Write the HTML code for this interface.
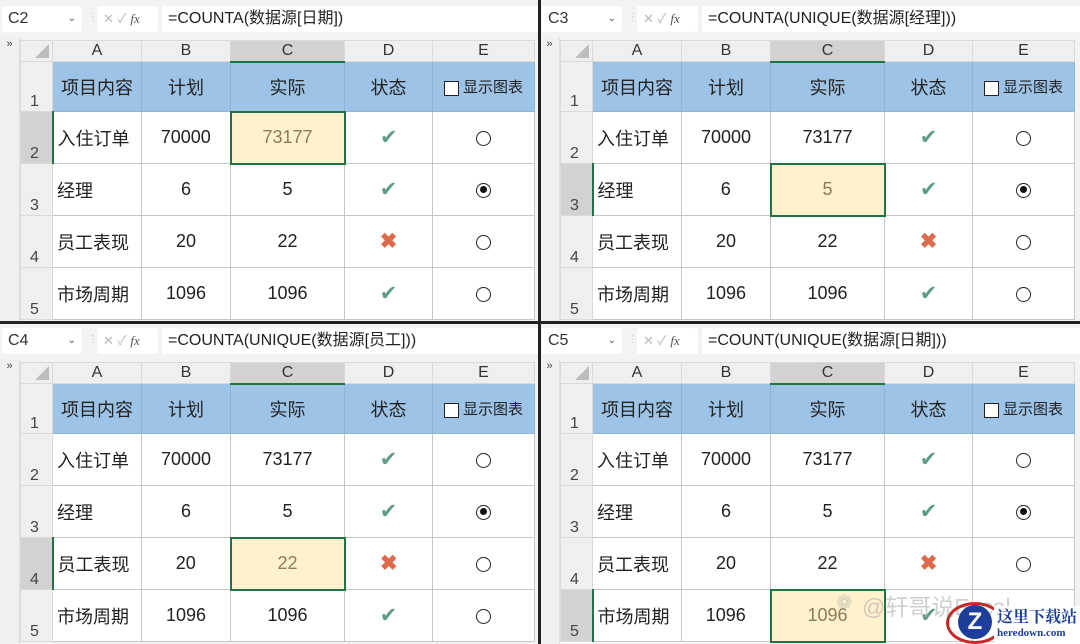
<!DOCTYPE html>
<html><head><meta charset="utf-8"><style>
*{margin:0;padding:0;box-sizing:border-box}
body{width:1080px;height:644px;background:#fff;position:relative;overflow:hidden;font-family:"Liberation Sans","Noto Sans CJK SC",sans-serif;color:#222}
.q{position:absolute;width:540px;height:322px;overflow:hidden;background:#f3f3f3}
.bar{position:absolute;left:0;top:0;width:540px;height:38px;background:#f3f3f3}
.nb{position:absolute;left:2px;top:6px;width:80px;height:26px;background:#fff;border-radius:3px;font-size:16px;line-height:26px;padding-left:6px;color:#333}
.nb i{position:absolute;right:6px;top:0;font-style:normal;font-size:10px;color:#555}
.dots{position:absolute;left:88px;top:12px;font-size:10px;color:#bbb}
.fxb{position:absolute;left:97px;top:6px;width:61px;height:26px;background:#fff;border-radius:3px;font-size:13px;line-height:26px;color:#bbb;padding-left:6px}
.fxb b{color:#555;font-style:italic;font-family:"Liberation Serif",serif;font-weight:normal;margin-left:4px}
.fi{position:absolute;left:162px;top:6px;width:380px;height:26px;background:#fff;font-size:16px;line-height:26px;padding-left:6px;color:#222}
.strip{position:absolute;left:0;top:38px;width:20px;height:290px;background:#f0f0f0;font-size:11px;color:#444;text-align:center;border-right:1px solid #ddd}
table{position:absolute;left:20px;top:40px;border-collapse:collapse;table-layout:fixed;background:#fff}
td{border:1px solid #c6c6c6;text-align:center;font-size:18px;padding:0;overflow:hidden;white-space:nowrap}
tr.ch td{height:21px;background:#efefef;font-size:16px;color:#333;border-color:#dadada}
tr.ch td.s{background:#d2d2d2;border-bottom:2px solid #217346}
td.rh{background:#efefef;color:#444;font-size:16px;text-align:left;vertical-align:bottom;padding-left:9px;border-color:#dadada}
td.rh.s{background:#d2d2d2;border-right:2px solid #217346}
td.corner{background:#efefef;position:relative}
td.corner:after{content:"";position:absolute;right:3px;bottom:3px;border-left:14px solid transparent;border-bottom:14px solid #bdbdbd}
tr.h td{background:#9dc3e6;height:50px;border-color:#8fb4d6}
tr.h td.rh{background:#efefef;border-color:#dadada}
tr.r td{height:52px}
td.l{text-align:left;padding-left:4px}
td.sel{background:#fff2cc;color:#8b7b5b;border:2px solid #217346}
.ck{color:#5e9c84;font-size:21px}
.x{color:#de6a4c;font-size:21px;font-weight:bold}
.rd{display:inline-block;width:15px;height:15px;border:1.5px solid #222;border-radius:50%;vertical-align:middle;position:relative}
.rd.on:after{content:"";position:absolute;left:2.5px;top:2.5px;width:7px;height:7px;border-radius:50%;background:#111}
.cb{display:inline-block;width:15px;height:15px;border:1.5px solid #222;vertical-align:middle;margin-right:4px;background:#fff}
.e{font-size:15px}
</style></head><body>

<div class="q" style="left:0;top:0">
<div class="bar"></div><div class="nb">C2<i>⌄</i></div><div class="dots">⋮</div><div class="fxb">✕ ✓<b>fx</b></div><div class="fi">=COUNTA(数据源[日期])</div>
<div class="strip">»</div>
<table><colgroup><col style="width:32px"><col style="width:89px"><col style="width:89px"><col style="width:114px"><col style="width:88px"><col style="width:102px"></colgroup>
<tr class="ch"><td class="corner"></td><td>A</td><td>B</td><td class="s">C</td><td>D</td><td>E</td></tr>
<tr class="h"><td class="rh">1</td><td>项目内容</td><td>计划</td><td>实际</td><td>状态</td><td class="e"><span class="cb"></span>显示图表</td></tr>
<tr class="r"><td class="rh s">2</td><td class="l">入住订单</td><td>70000</td><td class="sel">73177</td><td class="ck">✔</td><td><span class="rd"></span></td></tr>
<tr class="r"><td class="rh">3</td><td class="l">经理</td><td>6</td><td>5</td><td class="ck">✔</td><td><span class="rd on"></span></td></tr>
<tr class="r"><td class="rh">4</td><td class="l">员工表现</td><td>20</td><td>22</td><td class="x">✖</td><td><span class="rd"></span></td></tr>
<tr class="r"><td class="rh">5</td><td class="l">市场周期</td><td>1096</td><td>1096</td><td class="ck">✔</td><td><span class="rd"></span></td></tr>
</table></div>

<div class="q" style="left:540px;top:0">
<div class="bar"></div><div class="nb">C3<i>⌄</i></div><div class="dots">⋮</div><div class="fxb">✕ ✓<b>fx</b></div><div class="fi">=COUNTA(UNIQUE(数据源[经理]))</div>
<div class="strip">»</div>
<table><colgroup><col style="width:32px"><col style="width:89px"><col style="width:89px"><col style="width:114px"><col style="width:88px"><col style="width:102px"></colgroup>
<tr class="ch"><td class="corner"></td><td>A</td><td>B</td><td class="s">C</td><td>D</td><td>E</td></tr>
<tr class="h"><td class="rh">1</td><td>项目内容</td><td>计划</td><td>实际</td><td>状态</td><td class="e"><span class="cb"></span>显示图表</td></tr>
<tr class="r"><td class="rh">2</td><td class="l">入住订单</td><td>70000</td><td>73177</td><td class="ck">✔</td><td><span class="rd"></span></td></tr>
<tr class="r"><td class="rh s">3</td><td class="l">经理</td><td>6</td><td class="sel">5</td><td class="ck">✔</td><td><span class="rd on"></span></td></tr>
<tr class="r"><td class="rh">4</td><td class="l">员工表现</td><td>20</td><td>22</td><td class="x">✖</td><td><span class="rd"></span></td></tr>
<tr class="r"><td class="rh">5</td><td class="l">市场周期</td><td>1096</td><td>1096</td><td class="ck">✔</td><td><span class="rd"></span></td></tr>
</table></div>

<div class="q" style="left:0;top:322px">
<div class="bar"></div><div class="nb">C4<i>⌄</i></div><div class="dots">⋮</div><div class="fxb">✕ ✓<b>fx</b></div><div class="fi">=COUNTA(UNIQUE(数据源[员工]))</div>
<div class="strip">»</div>
<table><colgroup><col style="width:32px"><col style="width:89px"><col style="width:89px"><col style="width:114px"><col style="width:88px"><col style="width:102px"></colgroup>
<tr class="ch"><td class="corner"></td><td>A</td><td>B</td><td class="s">C</td><td>D</td><td>E</td></tr>
<tr class="h"><td class="rh">1</td><td>项目内容</td><td>计划</td><td>实际</td><td>状态</td><td class="e"><span class="cb"></span>显示图表</td></tr>
<tr class="r"><td class="rh">2</td><td class="l">入住订单</td><td>70000</td><td>73177</td><td class="ck">✔</td><td><span class="rd"></span></td></tr>
<tr class="r"><td class="rh">3</td><td class="l">经理</td><td>6</td><td>5</td><td class="ck">✔</td><td><span class="rd on"></span></td></tr>
<tr class="r"><td class="rh s">4</td><td class="l">员工表现</td><td>20</td><td class="sel">22</td><td class="x">✖</td><td><span class="rd"></span></td></tr>
<tr class="r"><td class="rh">5</td><td class="l">市场周期</td><td>1096</td><td>1096</td><td class="ck">✔</td><td><span class="rd"></span></td></tr>
</table></div>

<div class="q" style="left:540px;top:322px">
<div class="bar"></div><div class="nb">C5<i>⌄</i></div><div class="dots">⋮</div><div class="fxb">✕ ✓<b>fx</b></div><div class="fi">=COUNT(UNIQUE(数据源[日期]))</div>
<div class="strip">»</div>
<table><colgroup><col style="width:32px"><col style="width:89px"><col style="width:89px"><col style="width:114px"><col style="width:88px"><col style="width:102px"></colgroup>
<tr class="ch"><td class="corner"></td><td>A</td><td>B</td><td class="s">C</td><td>D</td><td>E</td></tr>
<tr class="h"><td class="rh">1</td><td>项目内容</td><td>计划</td><td>实际</td><td>状态</td><td class="e"><span class="cb"></span>显示图表</td></tr>
<tr class="r"><td class="rh">2</td><td class="l">入住订单</td><td>70000</td><td>73177</td><td class="ck">✔</td><td><span class="rd"></span></td></tr>
<tr class="r"><td class="rh">3</td><td class="l">经理</td><td>6</td><td>5</td><td class="ck">✔</td><td><span class="rd on"></span></td></tr>
<tr class="r"><td class="rh">4</td><td class="l">员工表现</td><td>20</td><td>22</td><td class="x">✖</td><td><span class="rd"></span></td></tr>
<tr class="r"><td class="rh s">5</td><td class="l">市场周期</td><td>1096</td><td class="sel">1096</td><td class="ck">✔</td><td><span class="rd"></span></td></tr>
</table>
</div>

<div style="position:absolute;left:862px;top:588px;font-size:23px;color:rgba(160,160,160,.5);white-space:nowrap">@轩哥说Excel</div>
<div style="position:absolute;left:836px;top:590px;font-size:20px;color:rgba(170,170,170,.5)">❁</div>
<div style="position:absolute;left:946px;top:602px;width:58px;height:42px;border-radius:50%;border:3px solid #c62828;border-right-color:transparent"></div>
<div style="position:absolute;left:958px;top:605px;width:34px;height:34px;border-radius:50%;background:#1e3e9c;color:#fff;font-size:24px;font-weight:bold;text-align:center;line-height:34px">Z</div>
<div style="position:absolute;left:994px;top:606px;width:86px;height:38px;background:#fff;padding:0 3px;font-family:'Noto Serif CJK SC',serif;font-weight:bold;font-size:16px;color:#1e3e9c;line-height:20px;white-space:nowrap">这里下载站<br><span style="font-size:11px;font-family:'Liberation Serif',serif;display:block;line-height:14px">heredown.com</span></div>

<div style="position:absolute;left:538px;top:0;width:3px;height:644px;background:#222"></div>
<div style="position:absolute;left:0;top:321px;width:1080px;height:3px;background:#222"></div>
</body></html>
